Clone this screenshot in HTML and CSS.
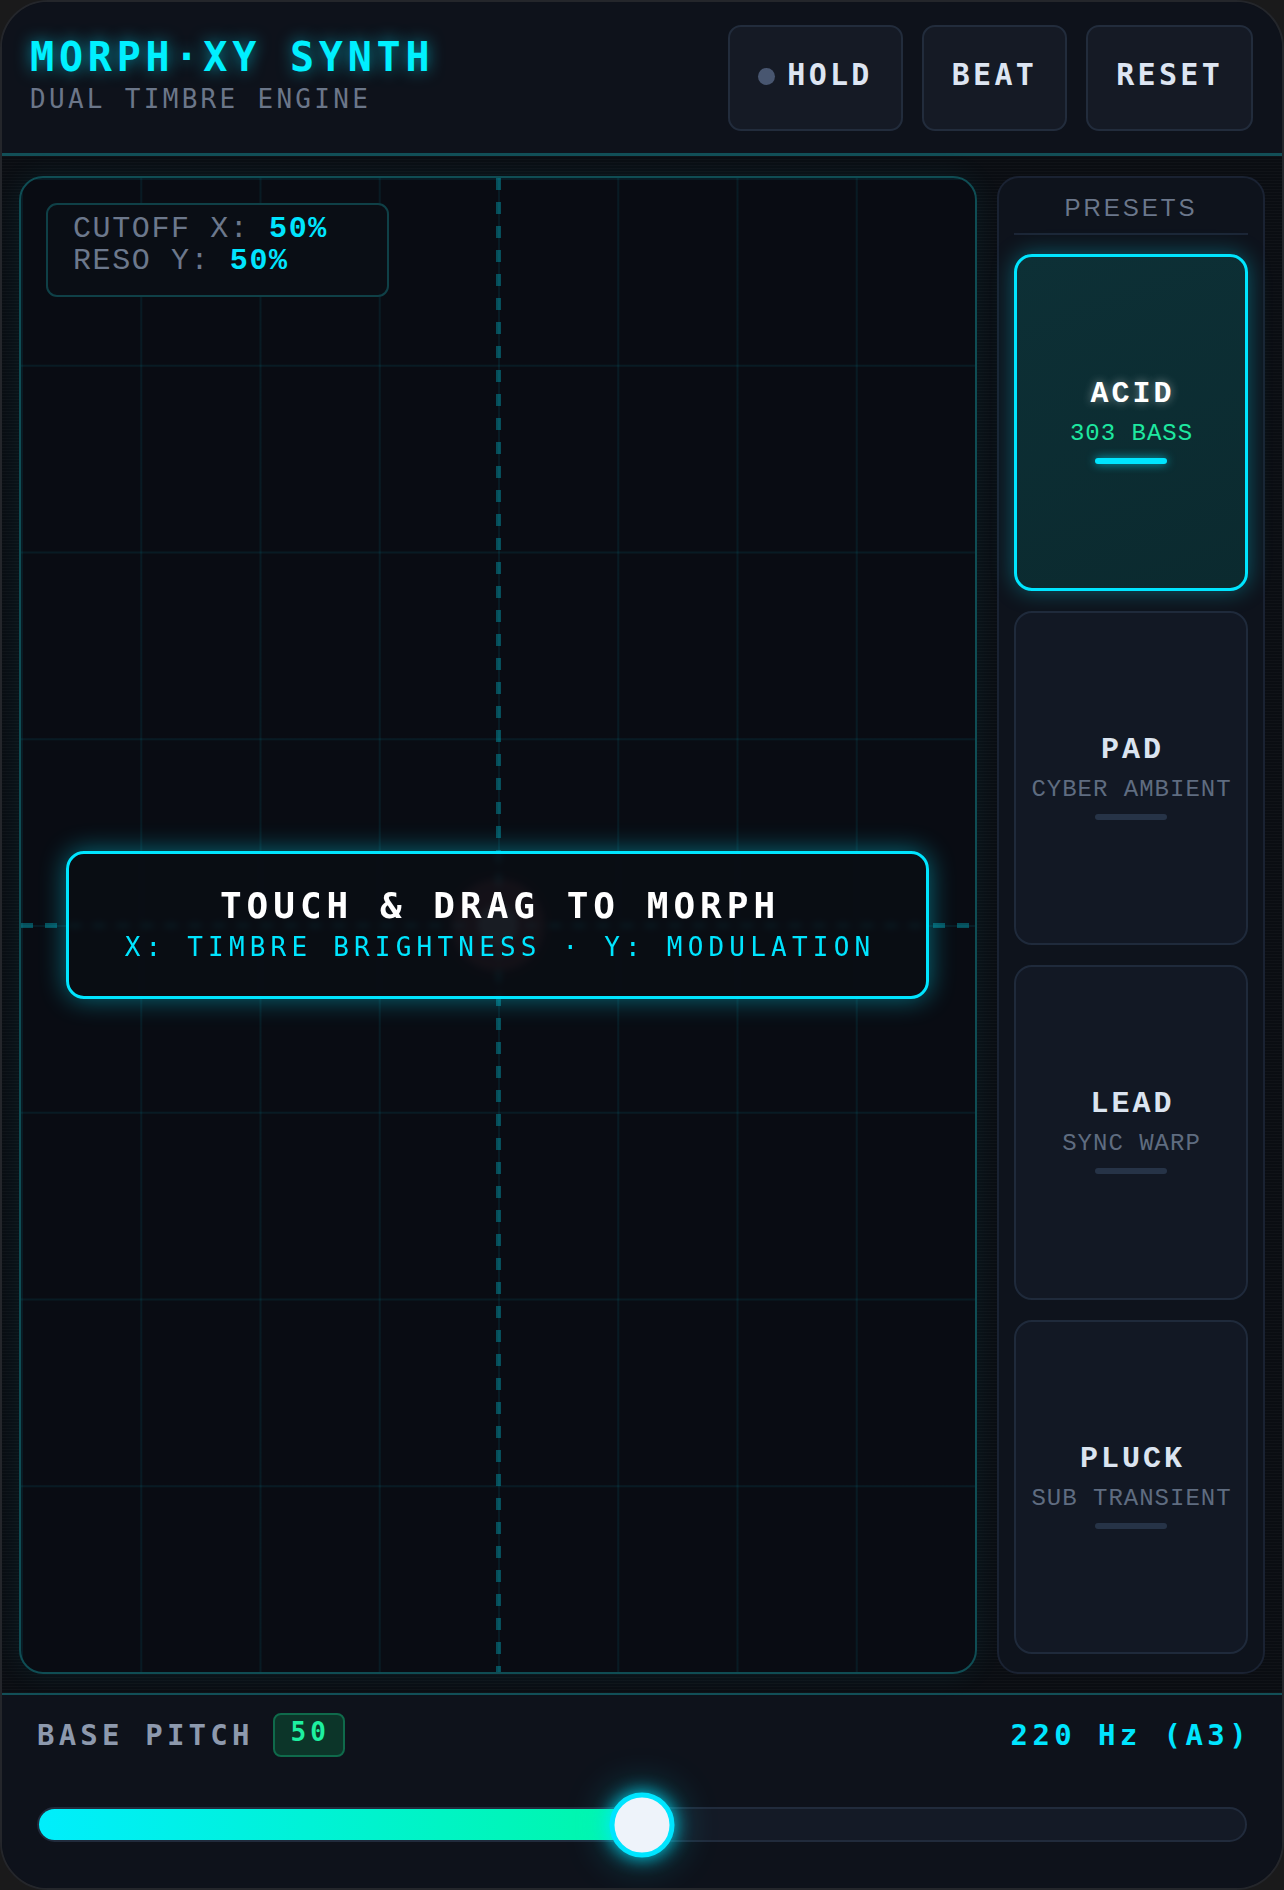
FILE: index.html
```html
<!DOCTYPE html>
<html lang="en">
<head>
  <meta charset="UTF-8">
  <title>Morph XY Synth</title>
  <link rel="stylesheet" href="styles.css">
</head>
<body>

  <div class="app">

    <header class="top-bar">
      <div class="brand">
        <h1 class="brand-title">MORPH·XY SYNTH</h1>
        <div class="brand-sub">DUAL TIMBRE ENGINE</div>
      </div>
      <div class="top-actions">
        <button class="ctl-btn"><span class="hold-dot"></span>HOLD</button>
        <button class="ctl-btn">BEAT</button>
        <button class="ctl-btn">RESET</button>
      </div>
    </header>

    <main class="stage">
      <div class="xy-pad">
        <div class="axis axis-v"></div>
        <div class="axis axis-h"></div>
        <div class="puck"></div>

        <div class="readout">
          <div class="readout-line">CUTOFF X: <b>50%</b></div>
          <div class="readout-line">RESO Y: <b>50%</b></div>
        </div>

        <div class="hint">
          <div class="hint-title">TOUCH &amp; DRAG TO MORPH</div>
          <div class="hint-sub">X: TIMBRE BRIGHTNESS · Y: MODULATION</div>
        </div>
      </div>

      <aside class="presets">
        <div class="presets-head">PRESETS</div>
        <div class="preset-list">
          <div class="preset active">
            <div class="preset-name">ACID</div>
            <div class="preset-sub">303 BASS</div>
            <div class="preset-bar"></div>
          </div>
          <div class="preset">
            <div class="preset-name">PAD</div>
            <div class="preset-sub">CYBER AMBIENT</div>
            <div class="preset-bar"></div>
          </div>
          <div class="preset">
            <div class="preset-name">LEAD</div>
            <div class="preset-sub">SYNC WARP</div>
            <div class="preset-bar"></div>
          </div>
          <div class="preset">
            <div class="preset-name">PLUCK</div>
            <div class="preset-sub">SUB TRANSIENT</div>
            <div class="preset-bar"></div>
          </div>
        </div>
      </aside>
    </main>

    <footer class="pitch">
      <div class="pitch-row">
        <div class="pitch-label">BASE PITCH <span class="pitch-badge">50</span></div>
        <div class="pitch-hz">220 Hz (A3)</div>
      </div>
      <div class="slider">
        <div class="slider-fill" style="width: 50%"></div>
        <div class="slider-thumb" style="left: 50%"></div>
      </div>
    </footer>

  </div>

</body>
</html>
```

FILE: styles.css
```css
body {
  margin: 0;
  background: #1a1a1b;
  font-family: 'DejaVu Sans Mono', monospace;
}

.app {
  width: 1284px;
  height: 1890px;
  box-sizing: border-box;
  border: 2px solid #24262b;
  border-radius: 48px;
  overflow: hidden;
  background: #0e121b;
  display: flex;
  flex-direction: column;
}

/* header */

.top-bar {
  height: 154px;
  box-sizing: border-box;
  flex-shrink: 0;
  border-bottom: 3px solid #124f57;
  display: flex;
  justify-content: space-between;
  align-items: flex-start;
  padding: 23px 29px 0 28px;
  background: #0e121b;
}

.brand {
  margin-top: 9px;
}

.brand-title {
  margin: 0;
  font-size: 40px;
  line-height: 46px;
  letter-spacing: 4.8px;
  color: #00f0ff;
  font-weight: bold;
  text-shadow: 0 0 16px rgba(0, 229, 255, 0.6);
}

.brand-sub {
  margin-top: 4px;
  font-size: 26px;
  line-height: 30px;
  letter-spacing: 3.3px;
  color: #6b7689;
}

.top-actions {
  display: flex;
  gap: 19px;
}

.ctl-btn {
  height: 106px;
  padding: 0 28px 8px 28px;
  background: #151a25;
  border: 2px solid #222c3c;
  border-radius: 13px;
  color: #dde5f2;
  font-family: 'DejaVu Sans Mono', monospace;
  font-weight: bold;
  font-size: 30px;
  letter-spacing: 3.3px;
  display: flex;
  align-items: center;
}

.hold-dot {
  width: 17px;
  height: 17px;
  border-radius: 50%;
  background: #485670;
  margin-right: 12px;
  margin-top: 4px;
}

/* stage */

.stage {
  flex: 1;
  display: flex;
  gap: 20px;
  padding: 20px 17px 19px 17px;
  background-color: #0a0d12;
  background-image: repeating-linear-gradient(to bottom, rgba(255,255,255,0.025) 0 1px, transparent 1px 3px);
}

.xy-pad {
  flex: 1;
  position: relative;
  border: 2px solid #0f4d54;
  border-radius: 24px;
  background-color: #090c13;
  background-image:
    linear-gradient(to right, rgba(0, 229, 255, 0.07) 2px, transparent 2px),
    linear-gradient(to bottom, rgba(0, 229, 255, 0.07) 2px, transparent 2px);
  background-size: 12.5% 12.5%;
  box-shadow: 0 0 30px rgba(0, 229, 255, 0.07);
  overflow: hidden;
}

.axis {
  position: absolute;
}

.axis-v {
  left: calc(50% - 2px);
  top: 0;
  bottom: 0;
  width: 5px;
  background: repeating-linear-gradient(to bottom, rgba(0, 200, 220, 0.35) 0 12px, transparent 12px 24px);
}

.axis-h {
  top: calc(50% - 2px);
  left: 0;
  right: 0;
  height: 5px;
  background: repeating-linear-gradient(to right, rgba(0, 200, 220, 0.35) 0 12px, transparent 12px 24px);
}

.puck {
  position: absolute;
  left: 50%;
  top: 50%;
  width: 40px;
  height: 40px;
  margin: -20px 0 0 -20px;
  border-radius: 50%;
  background: #5a606b;
  box-shadow: 0 0 0 24px rgba(255, 90, 110, 0.08), 0 0 0 27px rgba(200, 120, 130, 0.18), 0 0 50px rgba(255, 60, 80, 0.3);
}

.readout {
  position: absolute;
  left: 25px;
  top: 25px;
  width: 343px;
  height: 94px;
  box-sizing: border-box;
  padding: 8px 24px 0 25px;
  border: 2px solid #0f4047;
  border-radius: 11px;
  background: #0a0e15;
  font-family: 'Liberation Mono', monospace;
  font-size: 30px;
  line-height: 32px;
  letter-spacing: 1.6px;
  color: #6c788c;
}

.readout b {
  color: #00e5ff;
}

.hint {
  position: absolute;
  left: 45px;
  right: 46px;
  top: 50%;
  height: 148px;
  margin-top: -74px;
  box-sizing: border-box;
  border: 3px solid #00e5ff;
  border-radius: 18px;
  background: rgba(10, 13, 20, 0.82);
  backdrop-filter: blur(3px);
  box-shadow: 0 0 26px rgba(0, 229, 255, 0.45);
  display: flex;
  flex-direction: column;
  align-items: center;
  justify-content: center;
  padding-bottom: 4px;
}

.hint-title {
  font-size: 36px;
  line-height: 43px;
  font-weight: bold;
  letter-spacing: 5px;
  color: #ffffff;
  margin-right: -5px;
}

.hint-sub {
  margin-top: 5px;
  font-size: 26px;
  line-height: 31px;
  letter-spacing: 5.2px;
  color: #00e5ff;
  margin-right: -5px;
}

/* presets */

.presets {
  width: 268px;
  box-sizing: border-box;
  border: 2px solid #1a2232;
  border-radius: 22px;
  background: #0e131c;
  padding: 0 15px 18px;
  display: flex;
  flex-direction: column;
}

.presets-head {
  font-family: 'Liberation Sans', sans-serif;
  font-size: 24px;
  letter-spacing: 3px;
  color: #6b778b;
  text-align: center;
  height: 57px;
  line-height: 48px;
  padding-top: 6px;
  box-sizing: border-box;
  border-bottom: 2px solid #1c2636;
}

.preset-list {
  flex: 1;
  display: flex;
  flex-direction: column;
  gap: 20px;
  margin-top: 19px;
}

.preset {
  flex: 1;
  border: 2px solid #1f2a3b;
  border-radius: 18px;
  background: #121824;
  display: flex;
  flex-direction: column;
  align-items: center;
  justify-content: center;
  font-family: 'Liberation Mono', monospace;
  padding-bottom: 4px;
}

.preset-name {
  font-size: 30px;
  line-height: 36px;
  font-weight: bold;
  letter-spacing: 3px;
  color: #dbe4f0;
  margin-right: -3px;
}

.preset-sub {
  margin-top: 7px;
  font-size: 24px;
  line-height: 29px;
  letter-spacing: 1px;
  color: #5f6c80;
  margin-right: -1px;
}

.preset-bar {
  margin-top: 10px;
  width: 72px;
  height: 6px;
  border-radius: 3px;
  background: #263347;
}

.preset.active {
  border: 3px solid #00e5ff;
  background: linear-gradient(160deg, #0d3036, #0b2a2f);
  box-shadow: 0 0 22px rgba(0, 229, 255, 0.35);
}

.preset.active .preset-name {
  color: #ffffff;
  text-shadow: 0 0 10px rgba(255, 255, 255, 0.45);
}

.preset.active .preset-sub {
  color: #1ee8a0;
}

.preset.active .preset-bar {
  background: #00e5ff;
  box-shadow: 0 0 10px rgba(0, 229, 255, 0.7);
}

/* pitch footer */

.pitch {
  flex-shrink: 0;
  height: 195px;
  box-sizing: border-box;
  border-top: 2px solid #124f57;
  padding: 18px 35px 0 35px;
  background: #0e121b;
}

.pitch-row {
  display: flex;
  justify-content: space-between;
  align-items: center;
  height: 44px;
}

.pitch-label {
  display: flex;
  align-items: center;
  font-size: 29px;
  font-weight: bold;
  letter-spacing: 4.2px;
  color: #8d99ad;
}

.pitch-badge {
  margin-left: 19px;
  height: 44px;
  box-sizing: border-box;
  padding: 0 13px 6px 16px;
  line-height: 34px;
  border: 2px solid #0f6a4b;
  border-radius: 8px;
  background: #0c3529;
  color: #1ef0a0;
  font-size: 26px;
  letter-spacing: 4px;
}

.pitch-hz {
  font-size: 29px;
  font-weight: bold;
  letter-spacing: 4.4px;
  color: #00e5ff;
  margin-right: -4px;
}

.slider {
  position: relative;
  margin-top: 50px;
  height: 35px;
  box-sizing: border-box;
  border: 2px solid #212b3c;
  border-radius: 18px;
  background: #141a26;
}

.slider-fill {
  position: absolute;
  left: 0;
  top: 0;
  bottom: 0;
  border-radius: 16px 0 0 16px;
  background: linear-gradient(to right, #00eefc, #00f7a8);
}

.slider-thumb {
  position: absolute;
  top: 50%;
  width: 65px;
  height: 65px;
  box-sizing: border-box;
  transform: translate(-50%, -50%);
  border-radius: 50%;
  border: 5px solid #00e5ff;
  background: #eef3fa;
  box-shadow: 0 0 18px rgba(0, 229, 255, 0.9), 0 0 44px rgba(0, 229, 255, 0.4);
}
```
